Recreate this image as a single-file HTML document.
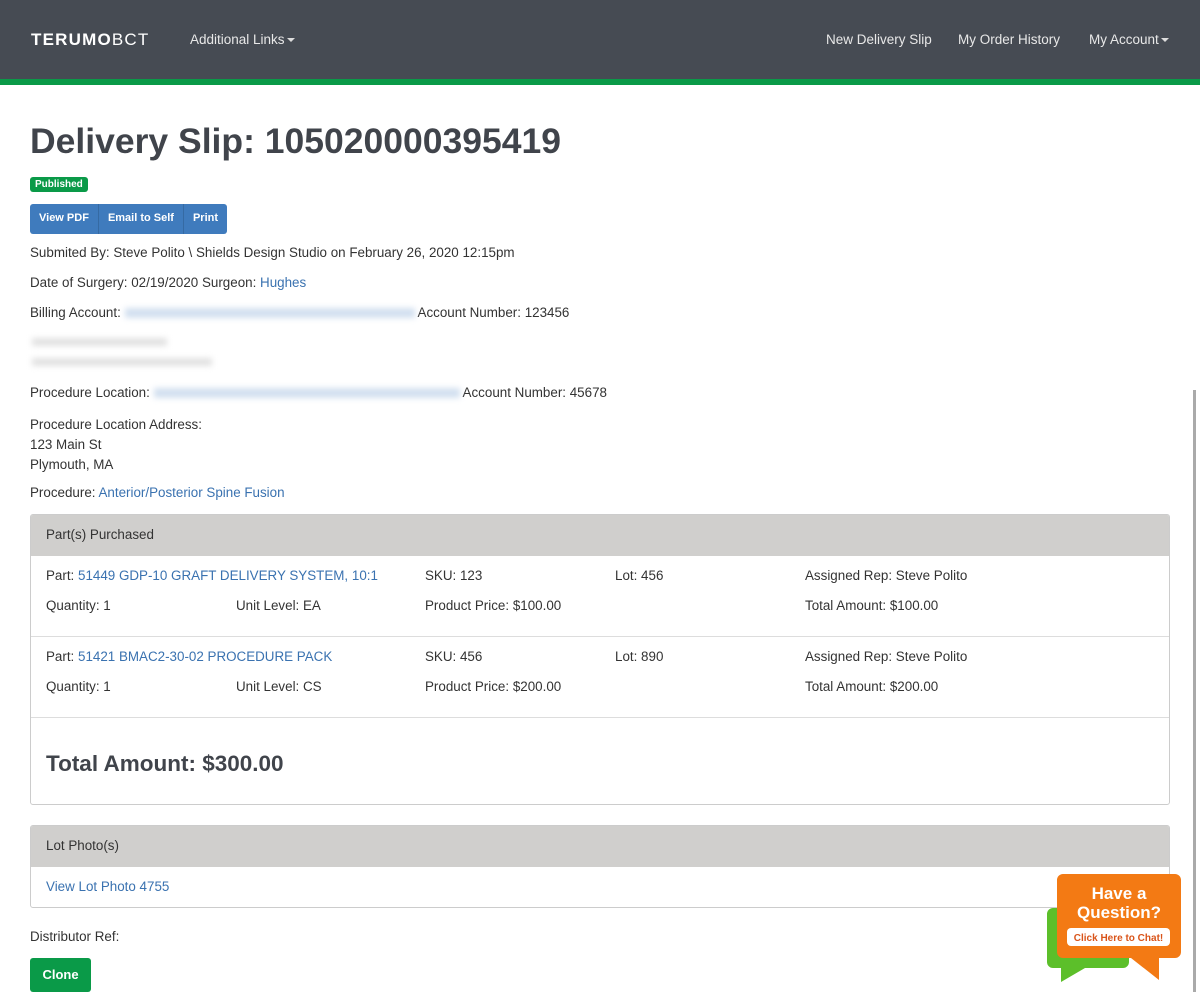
<!DOCTYPE html>
<html><head><meta charset="utf-8"><style>
*{margin:0;padding:0;box-sizing:border-box}
body{width:1200px;height:992px;overflow:hidden;background:#fff;font-family:"Liberation Sans",Arial,sans-serif;font-size:13.4px;color:#333;position:relative}
.a{position:absolute;white-space:nowrap}
a,.l{color:#3a72b0;text-decoration:none}
.nav{position:absolute;left:0;top:0;width:1200px;height:79px;background:#464b53}
.gb{position:absolute;left:0;top:79px;width:1200px;height:6px;background:#0a9a48}
.nl{color:#e8e8e8;font-size:13.5px;top:32px}
.car{display:inline-block;width:0;height:0;border-left:4px solid transparent;border-right:4px solid transparent;border-top:4px solid #ddd;margin-left:2px;vertical-align:middle}
.blur{display:inline-block;height:10px;background:#d3e0f0;filter:blur(3px);vertical-align:middle}
.panel{position:absolute;left:30px;width:1140px;border:1px solid #ccc;border-radius:3px;overflow:hidden}
.ph{height:41px;background:#d0cfcd;padding:12px 15px}
.row{position:relative;border-top:1px solid #ddd}
</style></head><body>
<div class="nav">
<div class="a" style="left:31px;top:30px;color:#fff;font-size:17px;letter-spacing:1.2px"><b>TERUMO</b>BCT</div>
<div class="a nl" style="left:190px">Additional Links<span class="car"></span></div>
<div class="a nl" style="left:826px">New Delivery Slip</div>
<div class="a nl" style="left:958px">My Order History</div>
<div class="a nl" style="left:1089px">My Account<span class="car"></span></div>
</div>
<div class="gb"></div>
<div class="a" style="left:30px;top:121px;font-size:35.5px;font-weight:bold;color:#40444b">Delivery Slip: 105020000395419</div>
<div class="a" style="left:30px;top:177px;background:#0a9a48;color:#fff;font-size:10px;font-weight:bold;padding:2px 5px;border-radius:3px">Published</div>
<div class="a" style="left:30px;top:204px;height:30px;background:#3f7bbd;border-radius:3px;color:#fff;font-size:11px;font-weight:bold;display:flex">
<span style="padding:8px 9px;border-right:1px solid #356aa3">View PDF</span><span style="padding:8px 9px;border-right:1px solid #356aa3">Email to Self</span><span style="padding:8px 9px">Print</span></div>
<div class="a" style="left:30px;top:245px">Submited By: Steve Polito \ Shields Design Studio on February 26, 2020 12:15pm</div>
<div class="a" style="left:30px;top:275px">Date of Surgery: 02/19/2020 Surgeon: <span class="l">Hughes</span></div>
<div class="a" style="left:30px;top:305px">Billing Account: <span class="blur" style="width:290px"></span> Account Number: 123456</div>
<div class="a" style="left:32px;top:338px;width:135px;height:8px;background:#e2e2e2;filter:blur(3px)"></div>
<div class="a" style="left:32px;top:358px;width:180px;height:8px;background:#e2e2e2;filter:blur(3px)"></div>
<div class="a" style="left:30px;top:385px">Procedure Location: <span class="blur" style="width:306px"></span> Account Number: 45678</div>
<div class="a" style="left:30px;top:415px;line-height:20px;white-space:normal">Procedure Location Address:<br>123 Main St<br>Plymouth, MA</div>
<div class="a" style="left:30px;top:485px">Procedure: <span class="l">Anterior/Posterior Spine Fusion</span></div>
<div class="panel" style="top:514px;height:291px">
<div class="ph">Part(s) Purchased</div>
<div class="row" style="border-top:none;height:80px">
<div class="a" style="left:15px;top:12px">Part: <span class="l">51449 GDP-10 GRAFT DELIVERY SYSTEM, 10:1</span></div>
<div class="a" style="left:394px;top:12px">SKU: 123</div>
<div class="a" style="left:584px;top:12px">Lot: 456</div>
<div class="a" style="left:774px;top:12px">Assigned Rep: Steve Polito</div>
<div class="a" style="left:15px;top:42px">Quantity: 1</div>
<div class="a" style="left:205px;top:42px">Unit Level: EA</div>
<div class="a" style="left:394px;top:42px">Product Price: $100.00</div>
<div class="a" style="left:774px;top:42px">Total Amount: $100.00</div>
</div>
<div class="row" style="height:81px">
<div class="a" style="left:15px;top:12px">Part: <span class="l">51421 BMAC2-30-02 PROCEDURE PACK</span></div>
<div class="a" style="left:394px;top:12px">SKU: 456</div>
<div class="a" style="left:584px;top:12px">Lot: 890</div>
<div class="a" style="left:774px;top:12px">Assigned Rep: Steve Polito</div>
<div class="a" style="left:15px;top:42px">Quantity: 1</div>
<div class="a" style="left:205px;top:42px">Unit Level: CS</div>
<div class="a" style="left:394px;top:42px">Product Price: $200.00</div>
<div class="a" style="left:774px;top:42px">Total Amount: $200.00</div>
</div>
<div class="row" style="height:88px">
<div class="a" style="left:15px;top:33px;font-size:22.5px;font-weight:bold;color:#40444b">Total Amount: $300.00</div>
</div>
</div>
<div class="panel" style="top:825px;height:83px">
<div class="ph">Lot Photo(s)</div>
<div style="padding:12px 15px"><span class="l">View Lot Photo 4755</span></div>
</div>
<div class="a" style="left:30px;top:929px">Distributor Ref:</div>
<div class="a" style="left:30px;top:958px;width:61px;height:34px;background:#0a9a48;color:#fff;border-radius:3px;font-size:13px;font-weight:bold;text-align:center;line-height:33px">Clone</div>
<div class="a" style="left:1193px;top:390px;width:3px;height:602px;background:#aaa"></div>
<svg class="a" style="left:1045px;top:872px" width="140" height="115" viewBox="0 0 140 115">
<path d="M8 36h70a6 6 0 0 1 6 6v48a6 6 0 0 1-6 6H40l-24 14v-14H8a6 6 0 0 1-6-6V42a6 6 0 0 1 6-6z" fill="#5cbf2a"/>
<path d="M18 2h112a6 6 0 0 1 6 6v72a6 6 0 0 1-6 6h-16v22l-28-22H18a6 6 0 0 1-6-6V8a6 6 0 0 1 6-6z" fill="#f37a14"/>
<text x="74" y="27" fill="#fff" font-family="Liberation Sans" font-weight="bold" font-size="17" text-anchor="middle">Have a</text>
<text x="74" y="46" fill="#fff" font-family="Liberation Sans" font-weight="bold" font-size="17" text-anchor="middle">Question?</text>
<rect x="22" y="56" width="103" height="18" rx="4" fill="#fff"/>
<text x="73.5" y="69" fill="#d9541a" font-family="Liberation Sans" font-weight="bold" font-size="10" text-anchor="middle">Click Here to Chat!</text>
</svg>
</body></html>
